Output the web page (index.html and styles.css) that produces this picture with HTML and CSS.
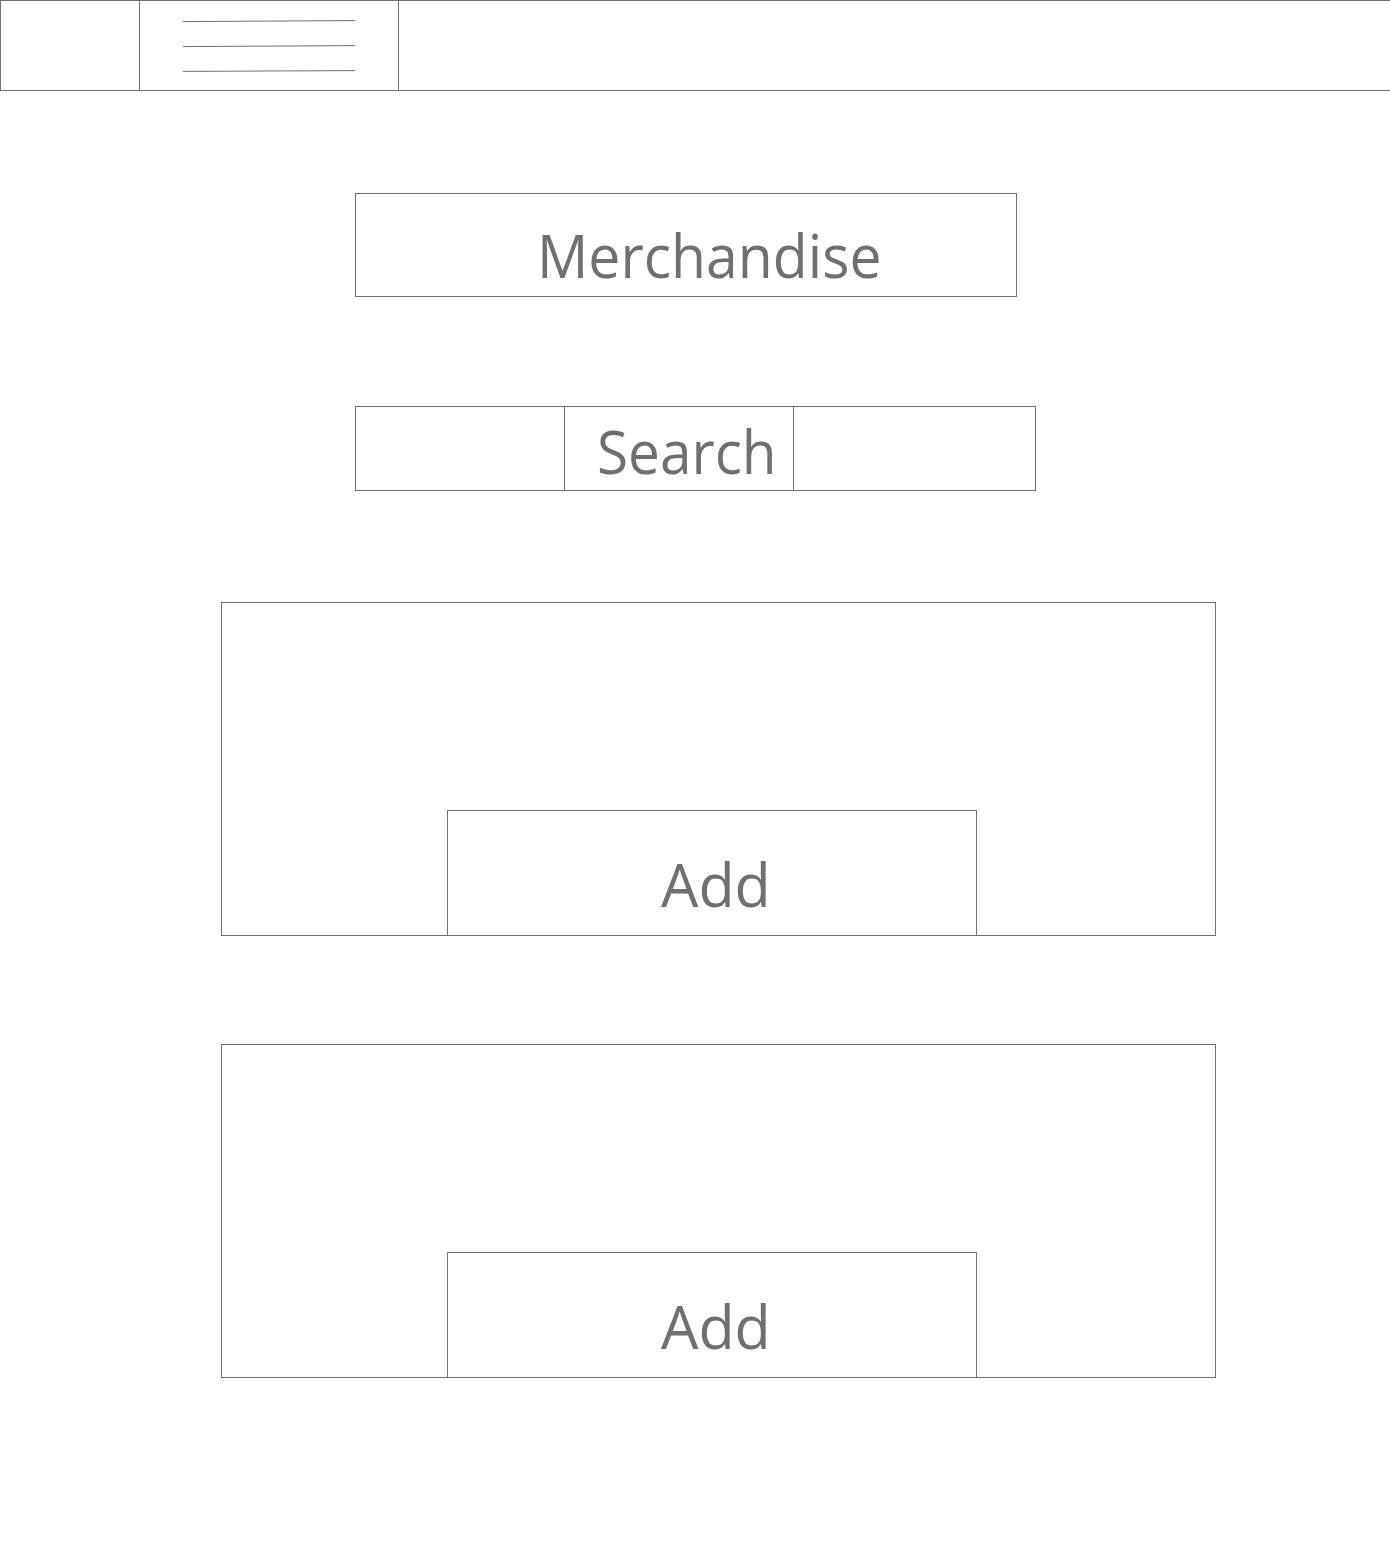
FILE: index.html
```html
<!DOCTYPE html>
<html lang="en">
<head>
<meta charset="utf-8">
<title>Merchandise</title>
<link rel="stylesheet" href="styles.css">
</head>
<body>
<header class="topbar">
  <div class="topbar-logo"></div>
  <div class="topbar-menu">
    <svg class="hamburger" width="258" height="89" viewBox="0 0 258 89" aria-hidden="true">
      <line x1="43" y1="20.6" x2="215" y2="19.6"/>
      <line x1="43" y1="45.6" x2="215" y2="44.6"/>
      <line x1="43" y1="70.4" x2="215" y2="69.6"/>
    </svg>
  </div>
  <div class="topbar-rest"></div>
</header>
<main class="page">
  <div class="title-box"><span class="label label-title">Merchandise</span></div>
  <div class="search-bar">
    <div class="search-left"></div>
    <div class="search-mid"><span class="label label-search">Search</span></div>
    <div class="search-right"></div>
  </div>
  <section class="card">
    <div class="add-btn"><span class="label label-add">Add</span></div>
  </section>
  <section class="card card-second">
    <div class="add-btn"><span class="label label-add">Add</span></div>
  </section>
</main>
</body>
</html>
```
FILE: styles.css
```css
* { box-sizing: border-box; }
html, body { margin: 0; padding: 0; background: #ffffff; }
body {
  font-family: "Open Sans", "Noto Sans", sans-serif;
  color: #707070;
  width: 1390px;
}
.topbar {
  display: flex;
  height: 91px;
  border-top: 1px solid #707070;
  border-bottom: 1px solid #707070;
  border-left: 1px solid #707070;
}
.topbar-logo {
  width: 139px;
  border-right: 1px solid #707070;
}
.topbar-menu {
  width: 259px;
  border-right: 1px solid #707070;
}
.hamburger { display: block; }
.hamburger line { stroke: #707070; stroke-width: 1; }
.topbar-rest { flex: 1; }

.page {
  display: flex;
  flex-direction: column;
  align-items: flex-start;
}
.label {
  display: block;
  font-size: 61px;
  line-height: 1;
  white-space: nowrap;
  transform-origin: left center;
}
.label-title { transform: scaleX(0.936); }
.label-search { transform: scaleX(0.93); }
.label-add { transform: scaleX(0.97); }

.title-box {
  margin: 102px 0 0 355px;
  width: 662px;
  height: 104px;
  border: 1px solid #707070;
  padding: 30px 0 0 181px;
}
.search-bar {
  margin: 109px 0 0 355px;
  width: 681px;
  height: 85px;
  border: 1px solid #707070;
  display: flex;
}
.search-left { width: 209px; border-right: 1px solid #707070; }
.search-mid {
  width: 229px;
  border-right: 1px solid #707070;
  padding: 13px 0 0 32px;
}
.search-right { flex: 1; }

.card {
  margin: 111px 0 0 221px;
  width: 995px;
  height: 334px;
  border: 1px solid #707070;
  display: flex;
  flex-direction: column;
  justify-content: flex-end;
  align-items: flex-start;
}
.card-second { margin-top: 108px; }
.add-btn {
  margin: 0 0 -1px 225px;
  width: 530px;
  height: 126px;
  border: 1px solid #707070;
  padding: 42px 0 0 213px;
}
```
